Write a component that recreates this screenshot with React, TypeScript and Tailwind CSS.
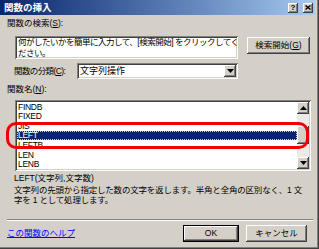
import React from 'react';

// Windows classic 3D borders
const sunken =
  'shadow-[inset_1px_1px_0_#808080,inset_-1px_-1px_0_#ffffff,inset_2px_2px_0_#404040,inset_-2px_-2px_0_#d4d0c8]';
const raised =
  'shadow-[inset_-1px_-1px_0_#404040,inset_1px_1px_0_#ffffff,inset_-2px_-2px_0_#808080,inset_2px_2px_0_#d4d0c8]';

const functions = ['FINDB', 'FIXED', 'JIS', 'LEFT', 'LEFTB', 'LEN', 'LENB'];

const Arrow = ({ up }: { up?: boolean }) => (
  <svg width="7" height="4" viewBox="0 0 7 4">
    <polygon points={up ? '3.5,0 7,4 0,4' : '0,0 7,0 3.5,4'} fill="#000" />
  </svg>
);

export default function App() {
  return (
    <div className="relative w-[319px] h-[249px] overflow-hidden bg-[#d4d0c8] border-r border-b border-[#404040] shadow-[inset_-1px_-1px_0_#808080] font-['Liberation_Sans','Noto_Sans_CJK_JP',sans-serif] text-[8.5px] leading-none text-black">
      {/* Title bar */}
      <div className="w-[315px] h-[15px] flex items-center pl-[4px] pr-[2px] bg-linear-to-r from-[#0a246a] to-[#a6caf0]">
        <span className="text-white font-bold text-[9.5px]">関数の挿入</span>
        <div className="ml-auto flex gap-[5px]">
          <div className={`w-[10px] h-[10px] bg-[#d4d0c8] flex items-center justify-center text-[8px] font-bold ${raised}`}>?</div>
          <div className={`w-[10px] h-[10px] bg-[#d4d0c8] flex items-center justify-center ${raised}`}>
            <svg width="6" height="5" viewBox="0 0 6 5">
              <path d="M0.5 0.5 L5.5 4.5 M5.5 0.5 L0.5 4.5" stroke="#000" strokeWidth="1.4" />
            </svg>
          </div>
        </div>
      </div>

      <div className="pl-[7px] pt-[3px]">
        {/* Search */}
        <div className="h-[11px] flex items-center">
          関数の検索(<span className="underline">S</span>):
        </div>
        <div className="mt-[7px] flex items-start">
          <div className={`ml-[8px] w-[223px] h-[23px] shrink-0 bg-white px-[3px] pt-[1px] leading-[11px] overflow-hidden whitespace-nowrap tracking-[-0.5px] ${sunken}`}>
            何がしたいかを簡単に入力して、[検索開始] をクリックしてく
            <br />
            ださい。
          </div>
          <button className={`ml-[9px] mt-[1px] w-[63px] h-[17px] bg-[#d4d0c8] flex items-center justify-center whitespace-nowrap ${raised}`}>
            検索開始(<span className="underline">G</span>)
          </button>
        </div>

        {/* Category */}
        <div className="mt-[4px] flex items-center">
          <div className="ml-[7px] w-[63px] shrink-0 whitespace-nowrap tracking-[-0.6px]">
            関数の分類(<span className="underline">C</span>):
          </div>
          <div className={`w-[161px] h-[16px] bg-white flex items-center pl-[3px] pr-[2px] ${sunken}`}>
            <span className="text-[9px]">文字列操作</span>
            <div className={`ml-auto w-[12px] h-[12px] bg-[#d4d0c8] flex items-center justify-center ${raised}`}>
              <Arrow />
            </div>
          </div>
        </div>

        {/* Function list */}
        <div className="mt-[5px] h-[10px] flex items-center">
          関数名(<span className="underline">N</span>):
        </div>
        <div className={`mt-[6px] ml-[8px] w-[296px] h-[71px] bg-white p-[2px] flex ${sunken}`}>
          <div className="flex-1 overflow-hidden">
            {functions.map((f) => (
              <div
                key={f}
                className={`h-[9.6px] flex items-center pl-[1px] tracking-[-0.3px] ${
                  f === 'LEFT' ? 'bg-[#0a246a] text-white outline outline-dotted outline-[#d4d0c8] -outline-offset-1' : ''
                }`}
              >
                {f}
              </div>
            ))}
          </div>
          <div className="w-[12px] flex flex-col bg-[#eceae6]">
            <div className={`h-[12px] bg-[#d4d0c8] flex items-center justify-center ${raised}`}>
              <Arrow up />
            </div>
            <div className="h-[12px]" />
            <div className={`h-[18px] bg-[#d4d0c8] ${raised}`} />
            <div className="h-[13px]" />
            <div className={`h-[12px] bg-[#d4d0c8] flex items-center justify-center ${raised}`}>
              <Arrow />
            </div>
          </div>
        </div>

        {/* Description */}
        <div className="mt-[2px] ml-[7px] h-[10px] flex items-center">LEFT(文字列,文字数)</div>
        <div className="mt-[2px] ml-[7px] leading-[10px] w-[300px] tracking-[-0.2px]">
          文字列の先頭から指定した数の文字を返します。半角と全角の区別なく、1 文
          <br />
          字を 1 として処理します。
        </div>

        {/* Separator */}
        <div className="mt-[14px] w-[306px] border-t border-[#808080] border-b border-b-white" />

        {/* Footer */}
        <div className="mt-[4px] flex items-center w-[300px]">
          <span className="text-[#0000ff] underline">この関数のヘルプ</span>
          <button className={`ml-auto w-[56px] h-[17px] bg-[#d4d0c8] border border-black flex items-center justify-center ${raised}`}>
            OK
          </button>
          <button className={`ml-[7px] w-[61px] h-[17px] bg-[#d4d0c8] flex items-center justify-center ${raised}`}>
            キャンセル
          </button>
        </div>
      </div>

      {/* Red highlight ring */}
      <div className="absolute left-[6px] top-[122px] w-[303px] h-[27px] border-[3.5px] border-[#f00000] rounded-[10px]" />
    </div>
  );
}
